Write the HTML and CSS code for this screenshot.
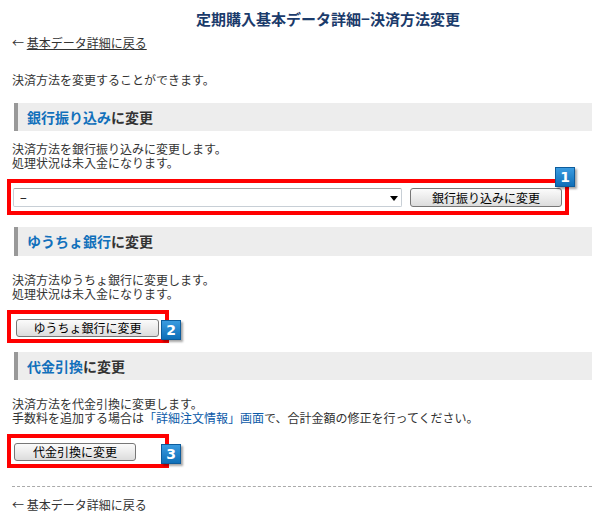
FILE: index.html
```html
<!DOCTYPE html>
<html lang="ja">
  <head>
    <meta charset="UTF-8" />
    <meta name="viewport" content="width=device-width, initial-scale=1.0" />
    <title>定期購入基本データ詳細−決済方法変更</title>
    <link rel="stylesheet" href="styles.css">
  </head>
  <body>
    <h1 class="page-title">定期購入基本データ詳細−決済方法変更</h1>
    <p class="back"><span class="arrow">←</span> <a href="#">基本データ詳細に戻る</a></p>

    <p class="intro">決済方法を変更することができます。</p>

    <!-- 銀行振り込み -->
    <h2 class="section-head sec-bank"><span class="key">銀行振り込み</span>に変更</h2>
    <p class="desc desc-bank">決済方法を銀行振り込みに変更します。<br />処理状況は未入金になります。</p>
    <div class="mark mark-wide">
      <div class="select-box">
        <select class="select">
          <option>−</option>
        </select>
        <svg class="select-arrow" width="8" height="5" viewBox="0 0 8 5"><path d="M0 0h8L4 5z" fill="#000"/></svg>
      </div>
      <button type="button" class="btn btn-bank">銀行振り込みに変更</button>
      <span class="badge badge-top">1</span>
    </div>

    <!-- ゆうちょ銀行 -->
    <h2 class="section-head sec-yucho"><span class="key">ゆうちょ銀行</span>に変更</h2>
    <p class="desc">決済方法ゆうちょ銀行に変更します。<br />処理状況は未入金になります。</p>
    <div class="mark mark-small">
      <button type="button" class="btn btn-yucho">ゆうちょ銀行に変更</button>
      <span class="badge badge-side">2</span>
    </div>

    <!-- 代金引換 -->
    <h2 class="section-head sec-cod"><span class="key">代金引換</span>に変更</h2>
    <p class="desc">決済方法を代金引換に変更します。<br />手数料を追加する場合は<a class="inline-link" href="#">「詳細注文情報」画面</a>で、合計金額の修正を行ってください。</p>
    <div class="mark mark-small mark-cod">
      <button type="button" class="btn btn-cod">代金引換に変更</button>
      <span class="badge badge-side">3</span>
    </div>

    <hr class="divider" />
    <p class="back back-bottom"><span class="arrow">←</span> <a href="#">基本データ詳細に戻る</a></p>
  </body>
</html>
```

FILE: styles.css
```css
body {
  margin: 0;
  padding: 0 11px 0 12px;
  font-family: "Noto Sans CJK JP", "DejaVu Sans", sans-serif;
  font-size: 12px;
  line-height: 13px;
  color: #333;
  background: #fff;
}

p {
  margin: 0;
}

.page-title {
  margin: 0;
  height: 18px;
  padding: 10px 0 0 52px;
  font-size: 15px;
  line-height: 18px;
  font-weight: bold;
  color: #1b3b6b;
  text-align: center;
}

.back {
  height: 13px;
  margin-top: 8px;
}

.back a,
.arrow {
  color: #333;
}

.intro {
  height: 13px;
  margin-top: 24px;
}

/* section headings */
.section-head {
  margin: 0 0 0 2px;
  height: 28px;
  padding-left: 9px;
  border-left: 4px solid #999;
  background: #ededed;
  font-size: 14px;
  line-height: 28px;
  font-weight: bold;
  color: #333;
}

.sec-bank {
  margin-top: 17px;
}

.sec-yucho {
  margin-top: 12px;
  height: 29px;
  line-height: 29px;
}

.sec-cod {
  margin-top: 9px;
}

.section-head .key {
  color: #1170bb;
}

.desc {
  height: 28px;
  margin-top: 17px;
  line-height: 14px;
}

.desc-bank {
  margin-top: 11px;
}

.inline-link {
  color: #0b5aa8;
  text-decoration: none;
}

/* red annotation frames */
.mark {
  position: relative;
  box-sizing: border-box;
  display: flex;
  align-items: flex-start;
  margin: 9px 0 0 -5px;
  border: 4px solid #f00;
}

.mark-wide {
  width: 562px;
  height: 36px;
  padding: 5px 3px 4px 2px;
  gap: 8px;
}

.mark-small {
  width: 162px;
  height: 33px;
  padding: 5px 0 0 5px;
}

.mark-cod {
  height: 34px;
  padding-left: 3px;
}

.select-box {
  position: relative;
  width: 389px;
  height: 19px;
}

.select {
  display: block;
  appearance: none;
  box-sizing: border-box;
  width: 100%;
  height: 19px;
  margin: 0;
  padding: 0 6px;
  border: 1px solid #c8cfd6;
  border-top-color: #a8a8a8;
  border-radius: 2px;
  background: #fff;
  font-family: inherit;
  font-size: 12px;
  line-height: 17px;
  color: #000;
}

.select-arrow {
  position: absolute;
  right: 4px;
  top: 8px;
}

.btn {
  box-sizing: border-box;
  height: 18px;
  margin: 0;
  padding: 0;
  border: 1px solid #777;
  border-radius: 3px;
  background: linear-gradient(#fbfbfb, #ececec 50%, #dcdcdc);
  font-family: inherit;
  font-size: 12px;
  line-height: 16px;
  color: #000;
}

.btn-bank {
  width: 152px;
  height: 19px;
}

.btn-yucho {
  width: 143px;
}

.btn-cod {
  width: 122px;
}

/* numbered badges */
.badge {
  position: absolute;
  width: 18px;
  height: 18px;
  background: linear-gradient(#3a9be0, #0f6fb8);
  border: 1px solid #0d5c9c;
  box-shadow: 2px 2px 2px rgba(0, 0, 0, 0.35);
  color: #fff;
  font-family: "DejaVu Sans", sans-serif;
  font-size: 14px;
  font-weight: bold;
  line-height: 18px;
  text-align: center;
}

.badge-top {
  right: -10px;
  top: -16px;
}

.badge-side {
  right: -16px;
  top: 6px;
}

.divider {
  margin: 18px 0 0;
  border: 0;
  border-top: 1px dashed #aaa;
}

.back-bottom {
  margin-top: 11px;
}
```
